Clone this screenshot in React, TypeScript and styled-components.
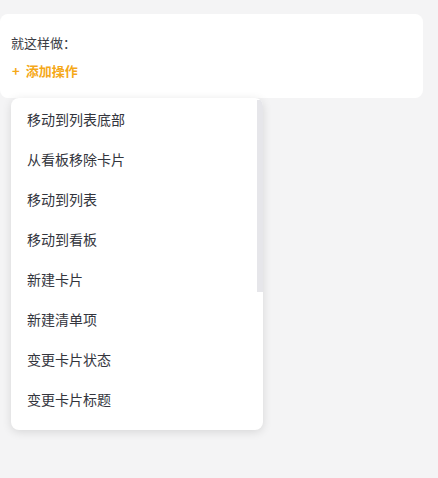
import React from "react";
import styled, { createGlobalStyle } from "styled-components";

const Global = createGlobalStyle`
  html, body { margin: 0; padding: 0; background: #f4f4f5; }
  body { font-family: "Noto Sans CJK SC", "Noto Sans", sans-serif; }
  * { box-sizing: border-box; }
`;

const Page = styled.div`
  padding: 14px 15px 0 0;
  height: 478px;
`;

const Card = styled.div`
  position: relative;
  background: #fff;
  border-radius: 8px;
  height: 84px;
  padding: 19px 11px 0 11px;
  display: flex;
  flex-direction: column;
  gap: 9px;
`;

const Label = styled.div`
  font-size: 13px;
  line-height: 19px;
  color: #3b3d45;
`;

const AddButton = styled.button`
  all: unset;
  font-family: inherit;
  font-size: 13px;
  line-height: 19px;
  font-weight: 600;
  color: #f5a818;
  cursor: pointer;
  display: flex;
  gap: 6px;
  padding-left: 1px;
`;

const Menu = styled.div`
  position: absolute;
  top: 84px;
  left: 11px;
  width: 252px;
  height: 332px;
  background: #fff;
  border-radius: 8px;
  box-shadow: 0 2px 10px rgba(0, 0, 0, 0.12);
  overflow: hidden;
`;

const List = styled.div`
  display: flex;
  flex-direction: column;
  padding: 1px 0 10px;
`;

const Thumb = styled.div`
  position: absolute;
  top: 2px;
  right: 0;
  width: 6px;
  height: 192px;
  background: #e6e6ea;
`;

const Item = styled.div`
  height: 40px;
  display: flex;
  align-items: center;
  padding-left: 16px;
  font-size: 14px;
  color: #33353d;
  cursor: pointer;
`;

const items = [
  "移动到列表底部",
  "从看板移除卡片",
  "移动到列表",
  "移动到看板",
  "新建卡片",
  "新建清单项",
  "变更卡片状态",
  "变更卡片标题",
];

export default function App() {
  return (
    <>
      <Global />
      <Page>
        <Card>
          <Label>就这样做：</Label>
          <AddButton>
            <span>+</span>
            <span>添加操作</span>
          </AddButton>
          <Menu>
            <List>
              {items.map((t) => (
                <Item key={t}>{t}</Item>
              ))}
            </List>
            <Thumb />
          </Menu>
        </Card>
      </Page>
    </>
  );
}
